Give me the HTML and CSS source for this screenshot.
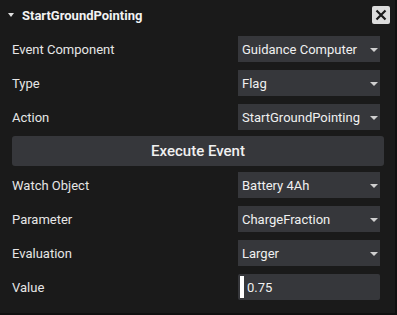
FILE: index.html
```html
<!DOCTYPE html>
<html lang="en">
<head>
    <meta charset="UTF-8">
    <title>StartGroundPointing</title>
    <link rel="stylesheet" href="styles.css">
</head>
<body>

<div class="panel">
    <div class="panel-header">
        <span class="caret"></span>
        <h1>StartGroundPointing</h1>
        <button class="close-btn" type="button">
            <svg width="12" height="12" viewBox="0 0 12 12"><path d="M1.5 1.5 L10.5 10.5 M10.5 1.5 L1.5 10.5" stroke="#1a1a1a" stroke-width="2.2"/></svg>
        </button>
    </div>

    <div class="row">
        <label>Event Component</label>
        <div class="select">Guidance Computer<span class="arrow"></span></div>
    </div>
    <div class="row">
        <label>Type</label>
        <div class="select">Flag<span class="arrow"></span></div>
    </div>
    <div class="row">
        <label>Action</label>
        <div class="select">StartGroundPointing<span class="arrow"></span></div>
    </div>

    <button class="execute-btn" type="button">Execute Event</button>

    <div class="row">
        <label>Watch Object</label>
        <div class="select">Battery 4Ah<span class="arrow"></span></div>
    </div>
    <div class="row">
        <label>Parameter</label>
        <div class="select">ChargeFraction<span class="arrow"></span></div>
    </div>
    <div class="row">
        <label>Evaluation</label>
        <div class="select">Larger<span class="arrow"></span></div>
    </div>
    <div class="row">
        <label>Value</label>
        <div class="text-input"><span class="cursor"></span>0.75</div>
    </div>
</div>

</body>
</html>
```

FILE: styles.css
```css
body { margin: 0; background-color: #101010; font-family: Roboto, "Liberation Sans", sans-serif; color: #e6e6e6; }
.panel { width: 395px; height: 313px; background-color: #1a1a1a; box-sizing: border-box; padding: 0 11px 0 12px; }
.panel-header { display: flex; align-items: center; height: 30px; margin-left: -4px; margin-right: -6px; }
.caret { width: 0; height: 0; border-left: 3px solid transparent; border-right: 3px solid transparent; border-top: 4px solid #e0e0e0; margin-right: 8px; }
h1 { flex: 1; margin: 0; font-size: 13px; font-weight: bold; color: #f2f2f2; }
.close-btn { width: 18px; height: 18px; padding: 0; border: none; border-radius: 2px; background-color: #dcdcdc; display: flex; align-items: center; justify-content: center; }
.row { display: flex; align-items: center; justify-content: space-between; height: 26px; margin-top: 8px; padding-right: 4px; }
.panel-header + .row { margin-top: 6px; }
label { font-size: 13px; color: #e6e6e6; }
.select, .text-input { width: 142px; height: 26px; box-sizing: border-box; background-color: #36373b; display: flex; align-items: center; padding-left: 4px; font-size: 13px; color: #f0f0f0; position: relative; }
.arrow { position: absolute; right: 2px; top: 12px; width: 0; height: 0; border-left: 4px solid transparent; border-right: 4px solid transparent; border-top: 4px solid #d0d0d0; }
.text-input { border-radius: 2px; padding-left: 2px; }
.cursor { width: 4px; height: 22px; background-color: #ffffff; margin-right: 3px; }
.execute-btn { display: block; width: 100%; height: 30px; margin: 6px 0 0; border: none; border-radius: 3px; background-color: #36373b; color: #f0f0f0; font-family: inherit; font-size: 15px; font-weight: 500; }
.execute-btn + .row { margin-top: 6px; }
```
